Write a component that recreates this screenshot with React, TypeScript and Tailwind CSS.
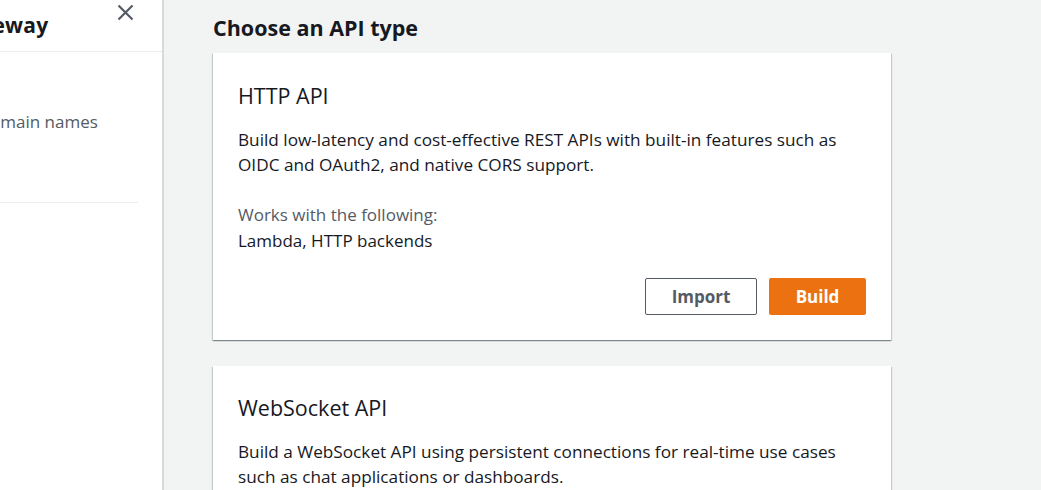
import React from "react";

export default function App() {
  const font = { fontFamily: '"Open Sans", "Noto Sans", Arial, sans-serif' };
  const shadow =
    "shadow-[0_1px_1px_0_rgba(0,28,36,0.3),1px_1px_1px_0_rgba(0,28,36,0.15),-1px_1px_1px_0_rgba(0,28,36,0.15)]";
  return (
    <div className="flex h-[490px] w-[1041px] overflow-hidden bg-[#f2f3f3] text-[#16191f]" style={font}>
      <aside className="h-full w-[164px] shrink-0 overflow-hidden border-r-2 border-[#d5dbdb] bg-white">
        <div className="-ml-[110px] w-[272px]">
          <div className="flex h-[52px] items-center justify-between border-b border-[#eaeded] pl-[24px] pr-[28px]">
            <span className="text-[21px] font-bold leading-none tracking-[0.2px]">API Gateway</span>
            <svg width="17" height="17" viewBox="0 0 17 17" className="mb-[26px]">
              <path d="M1.5 1.5 L15.5 15.5 M15.5 1.5 L1.5 15.5" stroke="#545b64" strokeWidth="2.2" />
            </svg>
          </div>
          <div className="pt-[57px] pb-[68px] pl-[24px]">
            <div className="text-[17px] leading-[25px] text-[#545b64]">Custom domain names</div>
          </div>
          <div className="w-[248px] border-t border-[#eaeded]" />
        </div>
      </aside>
      <main className="flex-1 pl-[49px]">
        <h1 className="pt-[12px] pb-[10px] text-[21.5px] font-bold leading-[31px]">Choose an API type</h1>
        <div className={`w-[678px] bg-white px-[25px] pt-[28px] pb-[25px] ${shadow}`}>
          <h2 className="text-[21.5px] leading-[30px]">HTTP API</h2>
          <p className="mt-[16px] text-[17.2px] leading-[25px]">
            Build low-latency and cost-effective REST APIs with built-in features such as
            <br />
            OIDC and OAuth2, and native CORS support.
          </p>
          <div className="mt-[25px] text-[17px] leading-[26px] text-[#545b64]">Works with the following:</div>
          <div className="text-[17px] leading-[26px]">Lambda, HTTP backends</div>
          <div className="mt-[24px] flex justify-end gap-[12px]">
            <button className="h-[37px] w-[112px] rounded-[2px] border border-[#545b64] bg-white text-[17px] font-bold text-[#545b64]">Import</button>
            <button className="h-[37px] w-[97px] rounded-[2px] bg-[#ec7211] text-[17px] font-bold text-white">Build</button>
          </div>
        </div>
        <div className={`mt-[26px] w-[678px] bg-white px-[25px] pt-[27px] pb-[25px] ${shadow}`}>
          <h2 className="text-[21.5px] leading-[30px]">WebSocket API</h2>
          <p className="mt-[16px] text-[17.2px] leading-[25px]">
            Build a WebSocket API using persistent connections for real-time use cases
            <br />
            such as chat applications or dashboards.
          </p>
        </div>
      </main>
    </div>
  );
}
